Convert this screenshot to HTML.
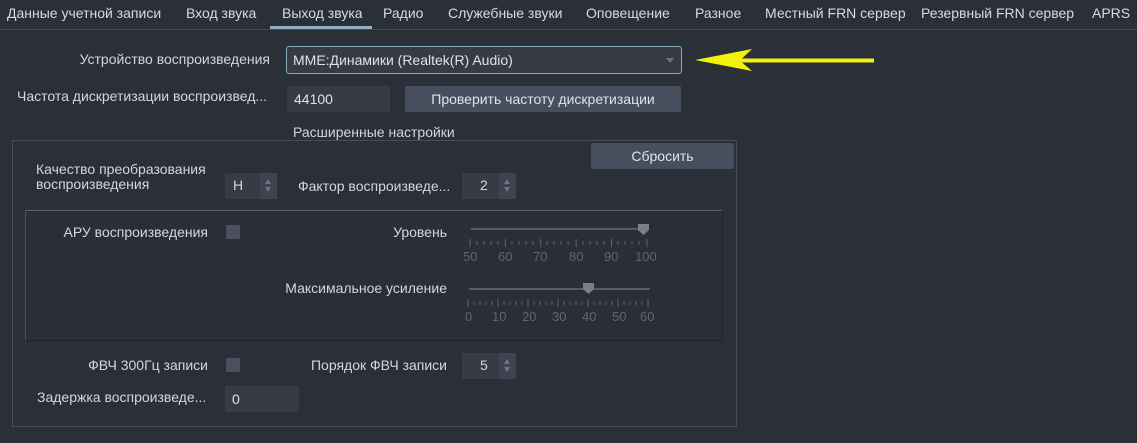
<!DOCTYPE html>
<html><head><meta charset="utf-8"><style>
*{box-sizing:border-box;margin:0;padding:0}
body{width:1137px;height:443px;background:#2b2f38;font-family:"Liberation Sans","DejaVu Sans",sans-serif;font-size:14px;color:#d4d6da;position:relative;overflow:hidden}
.a{position:absolute;white-space:nowrap}
.t{position:absolute;top:5px;font-size:14px;color:#d8dadd;white-space:nowrap}
.r{text-align:right}
.fld{position:absolute;background:#363b46;color:#dfe1e4;padding-left:7px;line-height:26px}
.btn{position:absolute;background:#474f5e;color:#e0e2e5;text-align:center;line-height:26px;border-radius:2px}
.spin{position:absolute;background:#363b46;height:26px;width:54px}
.spin span{position:absolute;left:8px;top:4px}
.spin i{position:absolute;right:0;top:0;width:17px;height:26px;background:#3d4350}
.spin i:before{content:"";position:absolute;left:5px;top:6px;border:3.5px solid transparent;border-bottom:5px solid #6f7684;border-top:0}
.spin i:after{content:"";position:absolute;left:5px;top:14px;border:3.5px solid transparent;border-top:5px solid #6f7684;border-bottom:0}
.cb{position:absolute;width:14px;height:14px;background:#4a505d;border-radius:1px}
.sl{position:absolute;height:2px;background:#555b67}
.tk{position:absolute;font-size:13px;color:#5e6573}
</style></head><body>
<div style="position:absolute;left:0;top:29px;width:1137px;height:1px;background:#444a55"></div>
<div style="position:absolute;left:270px;top:26px;width:102px;height:3px;background:#8fb3c4"></div>
<div class="t" style="left:7px">Данные учетной записи</div>
<div class="t" style="left:186px">Вход звука</div>
<div class="t" style="left:282px">Выход звука</div>
<div class="t" style="left:383px">Радио</div>
<div class="t" style="left:448px">Служебные звуки</div>
<div class="t" style="left:586px">Оповещение</div>
<div class="t" style="left:695px">Разное</div>
<div class="t" style="left:765px">Местный FRN сервер</div>
<div class="t" style="left:921px">Резервный FRN сервер</div>
<div class="t" style="left:1092px">APRS</div>

<div class="a r" style="right:867px;top:51px">Устройство воспроизведения</div>
<div class="a" style="left:286px;top:46px;width:396px;height:28px;border:1px solid #86aec0;border-radius:3px;background:#363b46;padding-left:6px;line-height:26px;color:#e0e2e5">MME:Динамики (Realtek(R) Audio)
<div style="position:absolute;right:7px;top:11px;border:4px solid transparent;border-top:5px solid #6d7480"></div></div>
<svg class="a" style="left:690px;top:46px" width="190" height="30"><path d="M5 14 L62 3 L52 12.5 L184 12.5 L184 16.5 L52 16.5 L62 25 Z" fill="#f2f20e"/></svg>

<div class="a" style="left:17px;top:88px">Частота дискретизации воспроизвед...</div>
<div class="fld" style="left:287px;top:86px;width:103px;height:26px">44100</div>
<div class="btn" style="left:405px;top:86px;width:276px;height:26px">Проверить частоту дискретизации</div>

<div class="a" style="left:293px;top:124px">Расширенные настройки</div>
<div class="a" style="left:12px;top:140px;width:725px;height:287px;border:1px solid #474d58"></div>
<div class="btn" style="left:591px;top:143px;width:143px;height:26px">Сбросить</div>

<div class="a" style="left:36px;top:162px;line-height:15px">Качество преобразования<br>воспроизведения</div>
<div class="spin" style="left:225px;top:173px;width:52px"><span>H</span><i></i></div>
<div class="a" style="left:298px;top:178px">Фактор воспроизведе...</div>
<div class="spin" style="left:462px;top:173px"><span style="left:18px">2</span><i></i></div>

<div class="a" style="left:25px;top:210px;width:698px;height:131px;border:1px solid #1f2228;border-top-color:#5a606b;border-left-color:#4c525d;background:#2a2e36"></div>
<div class="a r" style="right:929px;top:224px">АРУ воспроизведения</div>
<div class="cb" style="left:226px;top:225px"></div>
<div class="a r" style="right:690px;top:224px">Уровень</div>
<div class="sl" style="left:471px;top:228px;width:178px"></div>
<svg class="a" style="left:637px;top:223px" width="14" height="13"><path d="M1 1H12V7L6.5 12L1 7Z" fill="#7a808b"/></svg>
<svg class="a" style="left:469px;top:239px" width="182" height="9"><g stroke="#5e6573" stroke-width="1">
<path d="M1 0V8M36.4 0V8M71.8 0V8M107.2 0V8M142.6 0V8M178 0V8"/>
<path d="M8 2V6M15 2V6M22 2V6M29 2V6M43 2V6M50 2V6M57 2V6M64 2V6M78 2V6M85 2V6M92 2V6M99 2V6M114 2V6M121 2V6M128 2V6M135 2V6M149 2V6M156 2V6M163 2V6M170 2V6"/></g></svg>
<div class="tk" style="left:463px;top:249px">50</div><div class="tk" style="left:498px;top:249px">60</div><div class="tk" style="left:533px;top:249px">70</div><div class="tk" style="left:569px;top:249px">80</div><div class="tk" style="left:604px;top:249px">90</div><div class="tk" style="left:635px;top:249px">100</div>

<div class="a r" style="right:690px;top:280px">Максимальное усиление</div>
<div class="sl" style="left:469px;top:288px;width:181px"></div>
<svg class="a" style="left:582px;top:282px" width="14" height="13"><path d="M1 1H12V7L6.5 12L1 7Z" fill="#7a808b"/></svg>
<svg class="a" style="left:467px;top:299px" width="184" height="9"><g stroke="#5e6573" stroke-width="1">
<path d="M1 0V8M31 0V8M61 0V8M91 0V8M121 0V8M151 0V8M181 0V8"/>
<path d="M7 2V6M13 2V6M19 2V6M25 2V6M37 2V6M43 2V6M49 2V6M55 2V6M67 2V6M73 2V6M79 2V6M85 2V6M97 2V6M103 2V6M109 2V6M115 2V6M127 2V6M133 2V6M139 2V6M145 2V6M157 2V6M163 2V6M169 2V6M175 2V6"/></g></svg>
<div class="tk" style="left:465px;top:309px">0</div><div class="tk" style="left:492px;top:309px">10</div><div class="tk" style="left:522px;top:309px">20</div><div class="tk" style="left:552px;top:309px">30</div><div class="tk" style="left:582px;top:309px">40</div><div class="tk" style="left:612px;top:309px">50</div><div class="tk" style="left:640px;top:309px">60</div>

<div class="a r" style="right:929px;top:357px">ФВЧ 300Гц записи</div>
<div class="cb" style="left:226px;top:358px"></div>
<div class="a r" style="right:690px;top:357px">Порядок ФВЧ записи</div>
<div class="spin" style="left:462px;top:353px"><span style="left:18px">5</span><i></i></div>
<div class="a" style="left:37px;top:389px">Задержка воспроизведе...</div>
<div class="fld" style="left:225px;top:386px;width:74px;height:26px">0</div>
</body></html>
